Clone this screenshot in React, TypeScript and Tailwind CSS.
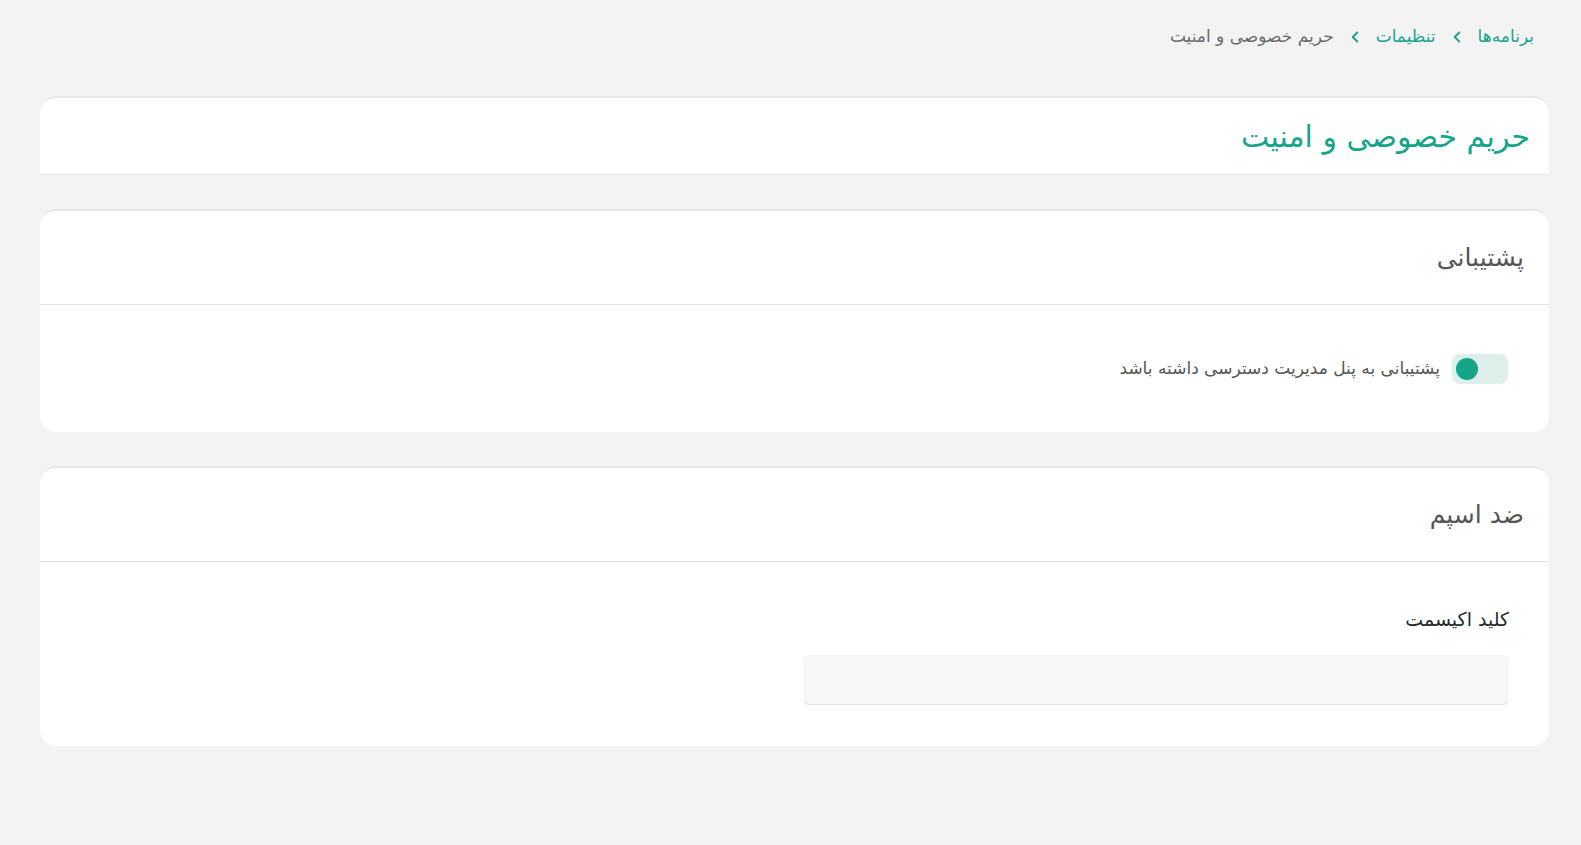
import { ChevronLeft } from 'lucide-react'

const font = { fontFamily: '"DejaVu Sans", "Noto Sans", sans-serif' }

function Breadcrumb() {
  return (
    <nav className="flex h-[24px] items-center justify-start gap-3 pr-[47px] text-[17px]">
      <a className="text-[#17a589]">برنامه‌ها</a>
      <ChevronLeft className="h-[18px] w-[18px] text-[#17a589]" strokeWidth={2.5} />
      <a className="text-[#17a589]">تنظیمات</a>
      <ChevronLeft className="h-[18px] w-[18px] text-[#17a589]" strokeWidth={2.5} />
      <span className="text-[#6b6b6b]">حریم خصوصی و امنیت</span>
    </nav>
  )
}

function Card({ title, children }: { title: string; children: React.ReactNode }) {
  return (
    <section className="rounded-2xl border-t-2 border-[#e7e7e7] bg-white">
      <header className="flex h-[94px] items-center border-b border-[#e3e3e3] px-[25px]">
        <h2 className="text-[25px] text-[#555]">{title}</h2>
      </header>
      {children}
    </section>
  )
}

export default function App() {
  return (
    <div dir="rtl" style={font} className="min-h-screen bg-[#f3f3f3] pt-[25px] pb-10">
      <Breadcrumb />
      <div className="ml-[40px] mr-[32px] mt-[47px] flex flex-col gap-[34px]">
        <div className="flex h-[79px] items-center rounded-t-2xl border-t-2 border-b border-[#e7e7e7] bg-white px-[19px]">
          <h1 className="text-[30px] text-[#17a589]">حریم خصوصی و امنیت</h1>
        </div>

        <Card title="پشتیبانی">
          <div className="flex h-[127px] items-center gap-3 px-[41px]">
            <button className="flex h-[30px] w-[56px] items-center justify-end rounded-lg bg-[#dcefea] px-1">
              <span className="h-[22px] w-[22px] rounded-full bg-[#17a589]" />
            </button>
            <span className="text-[17px] text-[#555]">پشتیبانی به پنل مدیریت دسترسی داشته باشد</span>
          </div>
        </Card>

        <Card title="ضد اسپم">
          <div className="px-[40px] pb-[41px] pt-[43px]">
            <label className="block text-[19px] text-[#1f2a2a]">کلید اکیسمت</label>
            <input className="mt-[21px] h-[50px] w-[706px] rounded-md border-b border-[#e3e3e3] bg-[#f8f8f8] px-3 outline-none" />
          </div>
        </Card>
      </div>
    </div>
  )
}
